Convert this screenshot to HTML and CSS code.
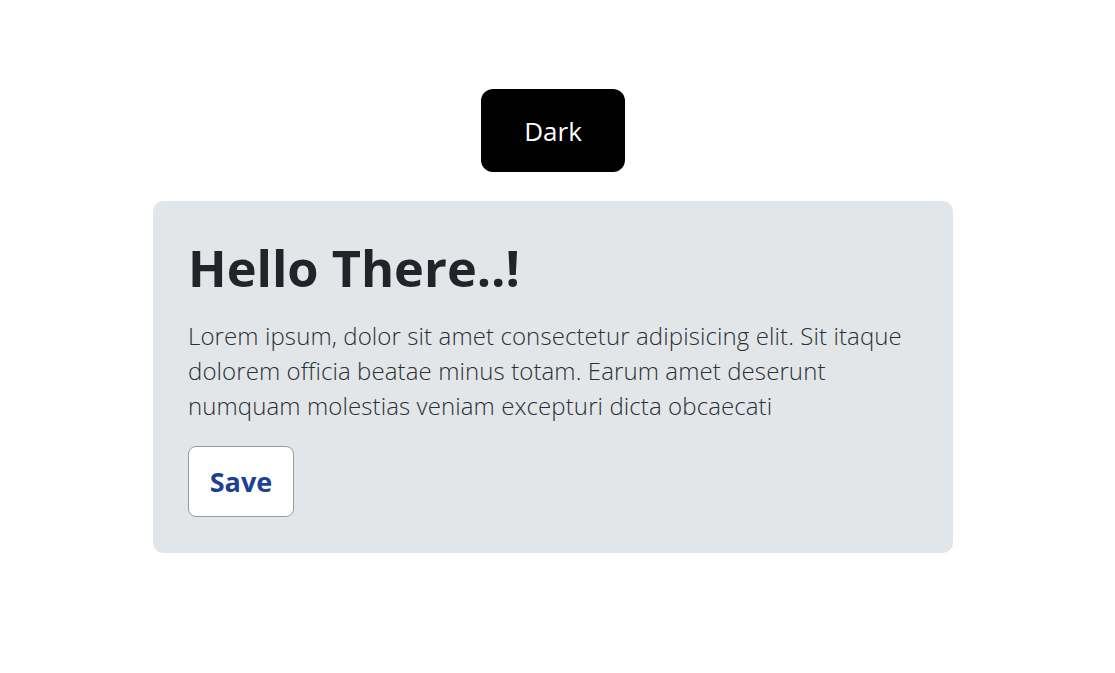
FILE: index.html
```html
<!DOCTYPE html>
<html lang="en">
<head>
<meta charset="utf-8">
<title>Hello There</title>
<link rel="stylesheet" href="styles.css">
</head>
<body>
<main class="page">
  <button class="theme-btn" type="button">Dark</button>
  <section class="card">
    <h1 class="card-title">Hello There..!</h1>
    <p class="card-text">Lorem ipsum, dolor sit amet consectetur adipisicing elit. Sit itaque dolorem officia beatae minus totam. Earum amet deserunt numquam molestias veniam excepturi dicta obcaecati</p>
    <button class="save-btn" type="button">Save</button>
  </section>
</main>
</body>
</html>
```
FILE: styles.css
```css
* { box-sizing: border-box; }
html, body { margin: 0; padding: 0; background: #ffffff; }
body { font-family: "Open Sans", "Noto Sans", sans-serif; }
.page {
  display: flex;
  flex-direction: column;
  align-items: center;
  padding-top: 89px;
  padding-right: 9px;
}
.theme-btn {
  width: 144px;
  height: 83px;
  border: none;
  border-radius: 12px;
  background: #000000;
  color: #ffffff;
  font-family: "Open Sans", sans-serif;
  font-size: 26px;
  font-weight: 400;
  margin-bottom: 29px;
  padding: 0;
}
.card {
  width: 800px;
  background: #e2e6e9;
  border-radius: 10px;
  padding: 35px 35px 36px 35px;
  display: flex;
  flex-direction: column;
  align-items: flex-start;
}
.card-title {
  margin: 0 0 18px 0;
  font-size: 50.5px;
  line-height: 64px;
  font-weight: 700;
  color: #212529;
}
.card-text {
  margin: 0 0 23px 0;
  font-size: 24px;
  line-height: 35px;
  font-weight: 300;
  letter-spacing: 0.1px;
  color: #2b3035;
}
.save-btn {
  width: 106px;
  height: 71px;
  background: #ffffff;
  border: 1px solid #9a9a9a;
  border-radius: 8px;
  color: #1e3f94;
  font-family: "Open Sans", sans-serif;
  font-size: 27px;
  font-weight: 700;
  padding: 0;
}
```
